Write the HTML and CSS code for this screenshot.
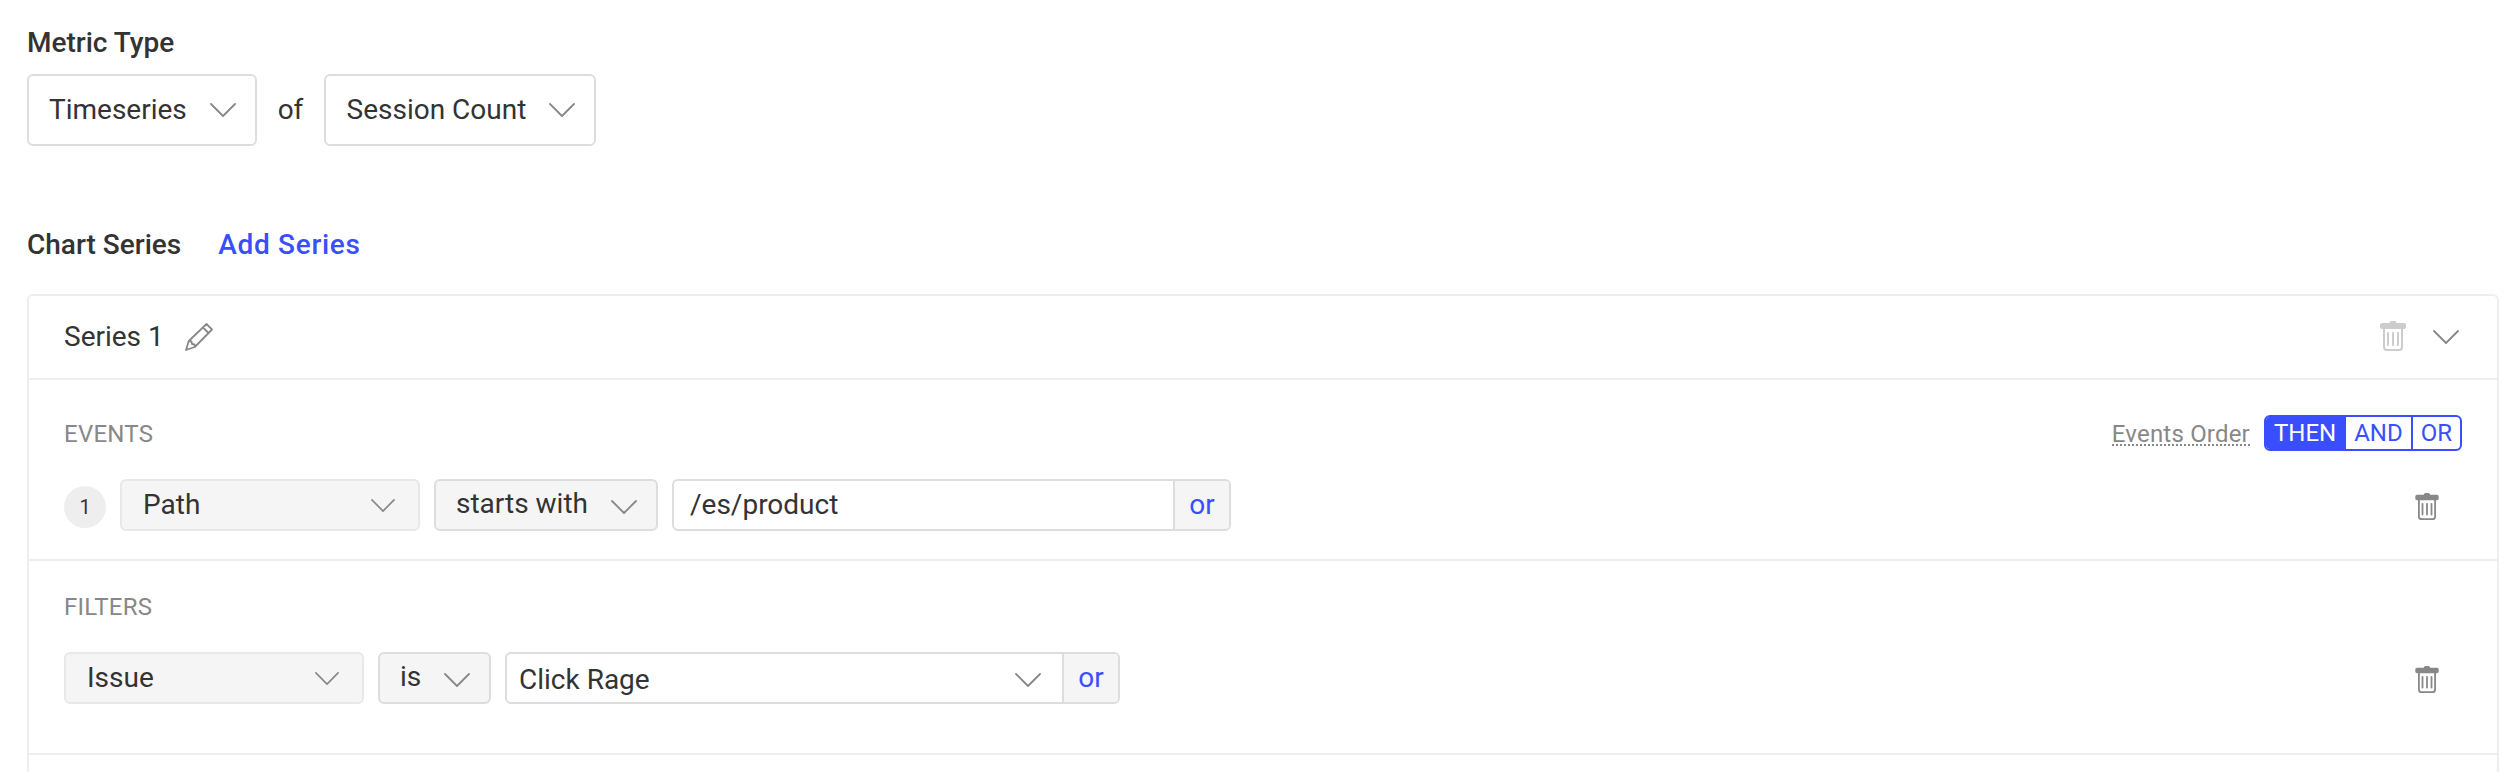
FILE: index.html
```html
<!DOCTYPE html>
<html lang="en">
<head>
<meta charset="utf-8">
<title>Metric</title>
<link rel="stylesheet" href="styles.css">
</head>
<body>
<svg width="0" height="0" class="defs">
  <symbol id="chevron" viewBox="0 0 26 14"><path d="M1 1 13 13 25 1" fill="none" stroke="currentColor" stroke-width="1.8" stroke-linecap="round" stroke-linejoin="round"/></symbol>
  <symbol id="trash" viewBox="0 0 26 30"><path d="M2 2h7.500a2 2 0 0 1 2-2h3a2 2 0 0 1 2 2H24a2 2 0 0 1 2 2v2a2 2 0 0 1-2 2H2a2 2 0 0 1-2-2V4a2 2 0 0 1 2-2z" fill="currentColor"/><path d="M4 7v19a3 3 0 0 0 3 3h12a3 3 0 0 0 3-3V7" fill="none" stroke="currentColor" stroke-width="2"/><path d="M8 12v12M13 12v12M18 12v12" stroke="currentColor" stroke-width="2" stroke-linecap="round"/></symbol>
  <symbol id="pencil" viewBox="0 0 28 28"><path d="M1 27 3.800 18 21.500 1 27 6.500 9.800 24zM3.800 18 6.500 18.500 7 21 9.500 21.500 9.800 24M18 4.500 23.500 10" fill="none" stroke="currentColor" stroke-width="1.800" stroke-linejoin="round"/></symbol>
</svg>
<main class="page">
  <h2 class="label">Metric Type</h2>
  <div class="metric-row">
    <div class="select metric-kind"><span>Timeseries</span><svg class="chevron"><use href="#chevron"/></svg></div>
    <span class="of">of</span>
    <div class="select metric-of"><span>Session Count</span><svg class="chevron"><use href="#chevron"/></svg></div>
  </div>
  <div class="series-heading"><h2 class="label">Chart Series</h2><a class="add">Add Series</a></div>
  <section class="panel">
    <header class="panel-head">
      <span>Series 1</span>
      <svg class="pencil"><use href="#pencil"/></svg>
      <svg class="trash trash-disabled"><use href="#trash"/></svg>
      <svg class="chevron"><use href="#chevron"/></svg>
    </header>
    <div class="block events">
      <div class="block-head">
        <span class="caption">EVENTS</span>
        <span class="order">Events Order</span>
        <div class="toggle"><span class="opt active">THEN</span><span class="opt">AND</span><span class="opt last">OR</span></div>
      </div>
      <div class="filter">
        <span class="index">1</span>
        <div class="field name"><span>Path</span><svg class="chevron small"><use href="#chevron"/></svg></div>
        <div class="field op op-starts"><span>starts with</span><svg class="chevron"><use href="#chevron"/></svg></div>
        <div class="field value value-path"><span class="value-text">/es/product</span><span class="or">or</span></div>
        <svg class="trash row-trash"><use href="#trash"/></svg>
      </div>
    </div>
    <div class="block filters">
      <div class="block-head"><span class="caption">FILTERS</span></div>
      <div class="filter">
        <div class="field name"><span>Issue</span><svg class="chevron small"><use href="#chevron"/></svg></div>
        <div class="field op op-is"><span>is</span><svg class="chevron"><use href="#chevron"/></svg></div>
        <div class="field value value-issue"><span class="value-text choice">Click Rage</span><svg class="chevron"><use href="#chevron"/></svg><span class="or">or</span></div>
        <svg class="trash row-trash"><use href="#trash"/></svg>
      </div>
    </div>
  </section>
</main>
</body>
</html>
```
FILE: styles.css
```css
* { box-sizing: border-box; }
body { margin: 0; background: #fff; color: #333; font: 400 28px/36px Roboto, sans-serif; overflow: hidden; }
.defs { display: block; }
svg { flex: none; display: block; }
.page { height: 772px; padding: 25px 19px 0 27px; overflow: hidden; }
.label { margin: 0; font-size: 28px; font-weight: 500; line-height: 36px; }
.metric-row { display: flex; align-items: center; margin-top: 13px; height: 72px; }
.select { display: flex; align-items: center; justify-content: space-between; height: 72px; padding: 0 19px 0 20px; border: 2px solid #ddd; border-radius: 6px; }
.metric-kind { width: 230px; }
.metric-of { width: 272px; padding-left: 20.5px; }
.of { width: 67px; text-align: center; }
.chevron { width: 26px; height: 14px; color: #888; }
.chevron.small { width: 24px; height: 13px; }
.series-heading { display: flex; gap: 37px; margin-top: 81px; height: 36px; }
.add { color: #394eff; font-weight: 500; letter-spacing: 0.7px; }
.panel { margin-top: 31px; height: 500px; border: 2px solid #eee; border-radius: 6px; }
.panel-head { display: flex; align-items: center; height: 84px; padding: 0 38px 0 35px; border-bottom: 2px solid #eee; }
.pencil { width: 28px; height: 28px; margin-left: 21px; color: #888; }
.trash { width: 26px; height: 30px; color: #888; }
.trash-disabled { margin-left: auto; margin-right: 27px; margin-bottom: 2px; color: #ccc; }
.block { padding: 35px 35px 0; border-bottom: 2px solid #eee; }
.events { height: 181px; }
.filters { height: 194px; padding-top: 27px; }
.block-head { display: flex; align-items: center; height: 36px; font-size: 24px; color: #888; }
.caption { margin-right: auto; padding-top: 2px; letter-spacing: 0.25px; }
.order { height: 30px; line-height: 37px; margin: 0 14px 4px 0; border-bottom: 2px dotted #888; letter-spacing: 0.2px; }
.toggle { display: flex; height: 36px; border: 2px solid #394eff; border-radius: 6px; overflow: hidden; line-height: 32px; color: #394eff; }
.opt { padding: 0 8px; border-right: 2px solid #394eff; }
.active { background: #394eff; color: #fff; }
.last { border-right: 0; }
.filter { display: flex; align-items: center; height: 52px; margin-top: 28px; }
.index { width: 42px; height: 42px; margin: 4px 14px 0 0; border-radius: 50%; background: #eee; font-size: 20px; line-height: 42px; text-align: center; }
.field { display: flex; align-items: center; height: 52px; margin-right: 14px; border: 2px solid #ddd; border-radius: 6px; background: #f5f5f5; }
.name { justify-content: space-between; width: 300px; padding: 0 23px 0 21px; border-color: #e8e8e8; }
.op { justify-content: space-between; padding: 0 19px 0 20px; }
.op span { padding-bottom: 2px; }
.op .chevron { margin-top: 4px; }
.op-starts { width: 224px; }
.op-is { width: 113px; }
.value { background: #fff; overflow: hidden; }
.value-path { width: 559px; }
.value-issue { width: 615px; }
.value-text { flex: 1; padding-left: 16px; }
.choice { padding: 4px 0 0 12px; }
.value .chevron { margin: 4px 21px 0 0; }
.or { width: 56px; height: 48px; border-left: 2px solid #ddd; background: #f5f5f5; color: #394eff; line-height: 48px; text-align: center; }
.row-trash { width: 24px; height: 27px; margin: 2px 23px 0 auto; }
```
